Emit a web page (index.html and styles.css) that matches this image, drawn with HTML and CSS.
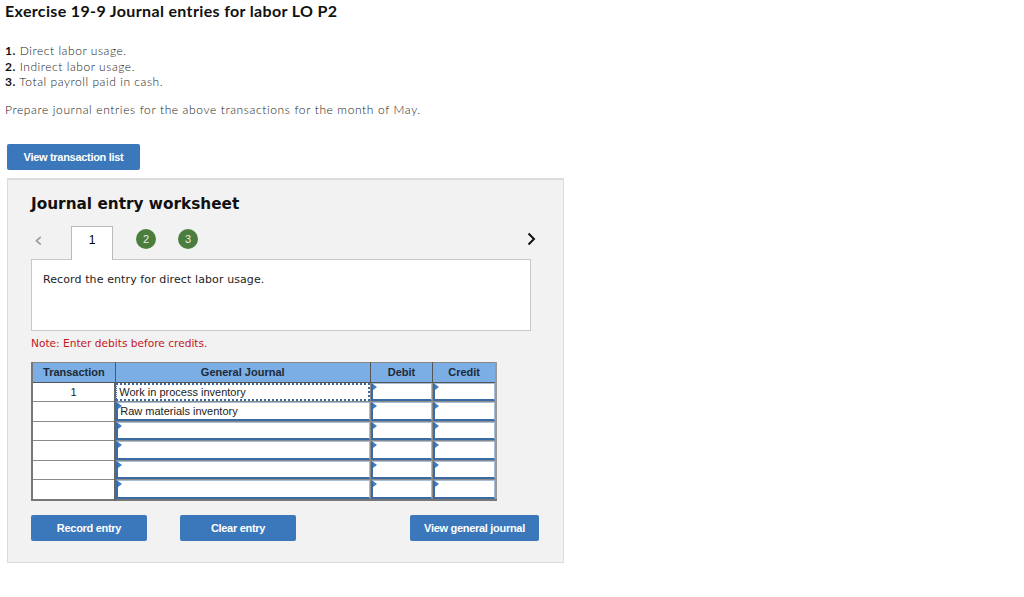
FILE: index.html
```html
<!DOCTYPE html>
<html>
  <head>
    <meta charset="UTF-8" />
    <title>Exercise 19-9 Journal entries for labor</title>
    <link rel="stylesheet" href="styles.css">
  </head>
  <body>
    <h1 class="title">Exercise 19-9 Journal entries for labor LO P2</h1>

    <ol class="tasks">
      <li><b>1.</b> Direct labor usage.</li>
      <li><b>2.</b> Indirect labor usage.</li>
      <li><b>3.</b> Total payroll paid in cash.</li>
    </ol>

    <p class="prompt">Prepare journal entries for the above transactions for the month of May.</p>

    <button class="btn btn-list">View transaction list</button>

    <div class="worksheet">
      <h2>Journal entry worksheet</h2>

      <div class="tabs">
        <span class="arrow arrow-prev">&lsaquo;</span>
        <span class="tab active">1</span>
        <span class="step">2</span>
        <span class="step">3</span>
        <span class="arrow arrow-next">
          <svg width="9" height="14" viewBox="0 0 9 14"><path d="M1.5 1.5 L7 7 L1.5 12.5" fill="none" stroke="#111" stroke-width="2"/></svg>
        </span>
      </div>

      <div class="instructions">Record the entry for direct labor usage.</div>

      <p class="note">Note: Enter debits before credits.</p>

      <table class="journal">
        <thead>
          <tr>
            <th class="col-tr">Transaction</th>
            <th class="col-gj">General Journal</th>
            <th class="col-amt">Debit</th>
            <th class="col-amt">Credit</th>
          </tr>
        </thead>
        <tbody>
          <tr>
            <td class="tr-num">1</td>
            <td><div class="field focus">Work in process inventory</div></td>
            <td><div class="field mark"></div></td>
            <td><div class="field mark"></div></td>
          </tr>
          <tr>
            <td class="tr-num"></td>
            <td><div class="field mark">Raw materials inventory</div></td>
            <td><div class="field mark"></div></td>
            <td><div class="field mark"></div></td>
          </tr>
          <tr>
            <td class="tr-num"></td>
            <td><div class="field mark"></div></td>
            <td><div class="field mark"></div></td>
            <td><div class="field mark"></div></td>
          </tr>
          <tr>
            <td class="tr-num"></td>
            <td><div class="field mark"></div></td>
            <td><div class="field mark"></div></td>
            <td><div class="field mark"></div></td>
          </tr>
          <tr>
            <td class="tr-num"></td>
            <td><div class="field mark"></div></td>
            <td><div class="field mark"></div></td>
            <td><div class="field mark"></div></td>
          </tr>
          <tr>
            <td class="tr-num"></td>
            <td><div class="field mark"></div></td>
            <td><div class="field mark"></div></td>
            <td><div class="field mark"></div></td>
          </tr>
        </tbody>
      </table>

      <div class="actions">
        <button class="btn btn-record">Record entry</button>
        <button class="btn btn-clear">Clear entry</button>
        <button class="btn btn-view">View general journal</button>
      </div>
    </div>
  </body>
</html>
```

FILE: styles.css
```css
body {
  margin: 0;
  padding: 0 5px;
  background: #fff;
  color: #333;
  font-family: "Lato", "Liberation Sans", sans-serif;
}

.title {
  margin: 0;
  padding-top: 1px;
  font-size: 16px;
  font-weight: 700;
  letter-spacing: 0.35px;
  color: #111;
  line-height: 20px;
}

.tasks {
  list-style: none;
  margin: 22px 0 0;
  padding: 0;
  font-size: 12px;
  line-height: 15.5px;
  letter-spacing: 0.55px;
  font-weight: 300;
  color: #222;
}

.tasks b {
  font-weight: 700;
  color: #111;
}

.prompt {
  margin: 12px 0 0;
  font-size: 12px;
  line-height: 15px;
  letter-spacing: 0.62px;
  font-weight: 300;
  color: #222;
}

.btn {
  border: none;
  border-radius: 2px;
  background-color: #3a77bb;
  color: #fff;
  font-family: "Liberation Sans", Arial, sans-serif;
  font-size: 11px;
  font-weight: 700;
  letter-spacing: -0.3px;
  height: 26px;
  padding: 0;
}

.btn-list {
  display: block;
  margin: 27px 0 0 2px;
  width: 133px;
}

.worksheet {
  margin: 8px 0 0 2px;
  width: 532px;
  padding: 0 0 21px 23px;
  background-color: #f2f2f2;
  border: 1px solid #dcdcdc;
  border-top-width: 2px;
}

.worksheet h2 {
  margin: 14px 0 0;
  font-family: "DejaVu Sans", Verdana, sans-serif;
  font-size: 15.3px;
  font-weight: 700;
  color: #111;
  line-height: 20px;
}

.tabs {
  display: flex;
  align-items: center;
  margin-top: 12px;
  height: 33px;
  width: 505px;
}

.arrow-prev {
  width: 37px;
  padding-left: 3px;
  font-family: "DejaVu Sans", sans-serif;
  font-size: 22px;
  color: #999;
  line-height: 20px;
  margin-top: -5px;
}

.tab {
  box-sizing: border-box;
  width: 42px;
  height: 34px;
  align-self: flex-end;
  margin-bottom: -1px;
  background: #fff;
  border: 1px solid #bbb;
  border-bottom: none;
  text-align: center;
  line-height: 26px;
  font-family: "Liberation Sans", Arial, sans-serif;
  font-size: 12px;
  color: #000;
  position: relative;
  z-index: 1;
}

.step {
  width: 20px;
  height: 20px;
  border-radius: 50%;
  background-color: #4b7d3e;
  color: #e9f0e6;
  font-family: "Liberation Sans", Arial, sans-serif;
  font-size: 11px;
  text-align: center;
  line-height: 20px;
  margin-left: 23px;
  margin-top: -7px;
}

.step + .step {
  margin-left: 22px;
}

.arrow-next {
  margin-left: auto;
  margin-right: 0;
  margin-top: -6px;
  display: flex;
}

.instructions {
  box-sizing: border-box;
  width: 500px;
  height: 72px;
  background: #fff;
  border: 1px solid #c8c8c8;
  padding: 13px 11px;
  font-family: "DejaVu Sans", Verdana, sans-serif;
  font-size: 11px;
  color: #222;
  letter-spacing: 0.1px;
}

.note {
  margin: 5px 0 0;
  font-family: "DejaVu Sans", Verdana, sans-serif;
  font-size: 10.6px;
  color: #c2161d;
  line-height: 14px;
}

.journal {
  margin-top: 12px;
  border-collapse: collapse;
  width: 466px;
  font-family: "Liberation Sans", Arial, sans-serif;
  font-size: 11px;
  color: #222;
  border: 2px solid #777;
  border-top-width: 1px;
  border-right-color: #999;
}

.journal th {
  background-color: #7aaee4;
  border: 1px solid #555;
  border-top-color: #888;
  height: 19px;
  padding: 0;
  font-weight: 700;
  color: #1e2a38;
}

.col-tr { width: 82px; }
.col-gj { width: 256px; }
.col-amt { width: 62px; }

.journal td {
  border: 1px solid #8a8a8a;
  background: #fff;
  height: 18.5px;
  padding: 0;
}

.journal td.tr-num {
  text-align: center;
  border-left: none;
  border-right: 2px solid #666;
}

.field {
  box-sizing: border-box;
  height: 18.5px;
  border: 1px solid #a8bdd6;
  border-left: 2px solid #3b6ba4;
  border-bottom: 2px solid #3b6ba4;
  padding: 1px 2px 0;
  line-height: 14px;
  position: relative;
}

.field.mark::before {
  content: "";
  position: absolute;
  left: 0;
  top: 0;
  border-top: 3px solid transparent;
  border-bottom: 3px solid transparent;
  border-left: 4px solid #3d7cc9;
}

.field.focus {
  border: 2px dotted #3b6ba4;
  border-left-width: 1px;
  padding-top: 0;
}

.actions {
  display: flex;
  margin-top: 14px;
  width: 508px;
}

.btn-record { width: 116px; }
.btn-clear { width: 116px; margin-left: 33px; }
.btn-view { width: 129px; margin-left: auto; }
```
